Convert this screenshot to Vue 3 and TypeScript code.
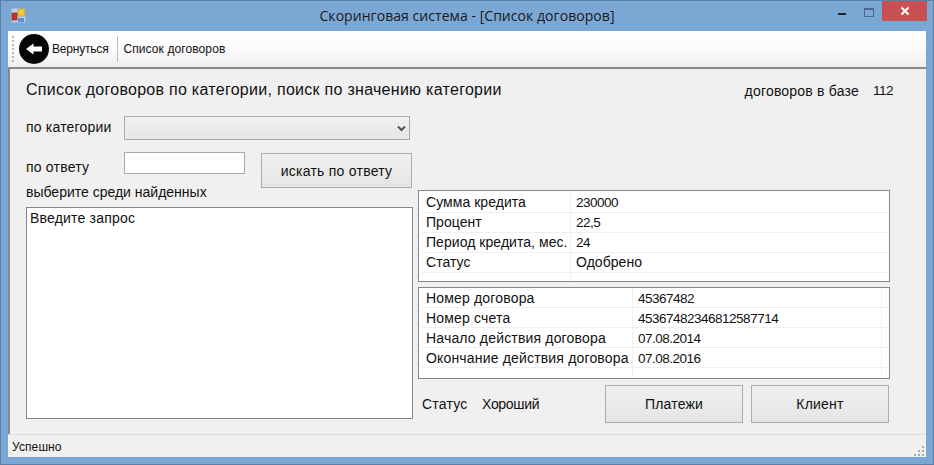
<script setup lang="ts">
interface Row {
  label: string
  value: string
}

const creditRows: Row[] = [
  { label: 'Сумма кредита', value: '230000' },
  { label: 'Процент', value: '22,5' },
  { label: 'Период кредита, мес.', value: '24' },
  { label: 'Статус', value: 'Одобрено' },
  { label: '', value: '' },
]

const contractRows: Row[] = [
  { label: 'Номер договора', value: '45367482' },
  { label: 'Номер счета', value: '45367482346812587714' },
  { label: 'Начало действия договора', value: '07.08.2014' },
  { label: 'Окончание действия договора', value: '07.08.2016' },
  { label: '', value: '' },
]

// digits in the original font are a bit narrower than the letters
const isNumeric = (value: string) => /^[\d.,]+$/.test(value)
</script>

<template>
  <div class="window">
    <header class="titlebar">
      <svg class="app-icon" width="15" height="15" viewBox="0 0 15 15">
        <rect x="0.5" y="0.5" width="14" height="14" fill="#c4ccd6" />
        <rect x="7" y="1" width="7" height="7" fill="#f3c93c" stroke="#a8893a" stroke-width="0.6" />
        <rect x="1" y="5" width="5" height="7" fill="#c9302c" stroke="#7c2420" stroke-width="0.6" />
        <rect x="7" y="10" width="6" height="4" fill="#5f8fd8" />
      </svg>
      <span class="title">Скоринговая система - [Список договоров]</span>
      <div class="controls">
        <span class="minimize"></span>
        <span class="maximize"></span>
        <span class="close">
          <svg width="10" height="10" viewBox="0 0 10 10">
            <path d="M1.5 1.5 L8.5 8.5 M8.5 1.5 L1.5 8.5" stroke="#fff" stroke-width="2" />
          </svg>
        </span>
      </div>
    </header>

    <div class="client">
      <nav class="toolbar">
        <span class="gripper"></span>
        <button class="tool back">
          <svg width="30" height="30" viewBox="0 0 30 30">
            <circle cx="15" cy="15" r="15" fill="#050505" />
            <path d="M7 15 L14.5 9.5 V12.5 H23 V17.5 H14.5 V20.5 Z" fill="#fff" />
          </svg>
          Вернуться
        </button>
        <span class="tool-sep"></span>
        <button class="tool list">Список договоров</button>
      </nav>

      <main class="main">
        <div class="head">
          <h1>Список договоров по категории, поиск по значению категории</h1>
          <div class="count"><span>договоров в базе</span><span class="num">112</span></div>
        </div>

        <div class="columns">
          <section class="left">
            <div class="field category">
              <label>по категории</label>
              <div class="select">
                <svg width="9" height="7" viewBox="0 0 9 7">
                  <path d="M1 1.5 L4.5 5 L8 1.5" fill="none" stroke="#555" stroke-width="2" />
                </svg>
              </div>
            </div>
            <div class="field answer">
              <label>по ответу</label>
              <input type="text" class="answer-input" />
              <button class="btn search">искать по ответу</button>
            </div>
            <label class="found-label">выберите среди найденных</label>
            <div class="listbox">Введите запрос</div>
          </section>

          <section class="right">
            <div class="grid credit">
              <div v-for="(row, i) in creditRows" :key="i" class="grid-row">
                <span class="cell">{{ row.label }}</span>
                <span class="cell" :class="{ num: isNumeric(row.value) }">{{ row.value }}</span>
              </div>
            </div>
            <div class="grid contract">
              <div v-for="(row, i) in contractRows" :key="i" class="grid-row">
                <span class="cell">{{ row.label }}</span>
                <span class="cell" :class="{ num: isNumeric(row.value) }">{{ row.value }}</span>
                <span class="cell"></span>
              </div>
            </div>
            <div class="actions">
              <span class="status-label">Статус</span>
              <span class="status-value">Хороший</span>
              <button class="btn action payments">Платежи</button>
              <button class="btn action">Клиент</button>
            </div>
          </section>
        </div>
      </main>

      <footer class="statusbar">
        <span>Успешно</span>
        <svg class="resize" width="12" height="12" viewBox="0 0 12 12" fill="#a9a9a9">
          <rect x="9" y="1" width="2" height="2" />
          <rect x="5" y="5" width="2" height="2" />
          <rect x="9" y="5" width="2" height="2" />
          <rect x="1" y="9" width="2" height="2" />
          <rect x="5" y="9" width="2" height="2" />
          <rect x="9" y="9" width="2" height="2" />
        </svg>
      </footer>
    </div>
  </div>
</template>

<style scoped>
.window {
  width: 934px;
  height: 465px;
  box-sizing: border-box;
  display: flex;
  flex-direction: column;
  background: #7ba7d4;
  border: 1px solid #5f7fa6;
  font-family: "Liberation Sans", Arial, sans-serif;
  font-size: 14px;
  letter-spacing: 0.2px;
  color: #111;
}

.titlebar {
  height: 30px;
  flex: none;
  display: flex;
  align-items: center;
  position: relative;
  padding-left: 10px;
}

.app-icon {
  margin-top: -2px;
}

.title {
  position: absolute;
  left: 0;
  right: 0;
  top: 5px;
  text-align: center;
  font-family: "Open Sans", sans-serif;
  font-size: 14px;
  letter-spacing: 0.05px;
  color: #1a1a1a;
}

.controls {
  position: absolute;
  top: 0;
  right: 6px;
  display: flex;
  align-items: flex-start;
}

.minimize {
  width: 8px;
  height: 2px;
  background: #222;
  margin-top: 12px;
  margin-right: 18px;
}

.maximize {
  width: 8px;
  height: 6px;
  border: 1px solid #4d6a8c;
  border-top-width: 2px;
  margin-top: 7px;
  margin-right: 8px;
}

.close {
  width: 45px;
  height: 20px;
  background: #c75050;
  display: flex;
  align-items: center;
  justify-content: center;
}

.client {
  flex: 1;
  min-height: 0;
  margin: 0 7px 7px;
  display: flex;
  flex-direction: column;
  background: #f0f0f0;
}

.toolbar {
  height: 38px;
  flex: none;
  box-sizing: border-box;
  display: flex;
  align-items: center;
  padding-left: 4px;
  background: linear-gradient(#ffffff, #fbfbfb 50%, #eeeeee);
  border-bottom: 2px solid #8a8a8a;
  border-radius: 2px 2px 0 0;
  font-size: 12px;
  letter-spacing: 0;
}

.gripper {
  width: 2px;
  height: 26px;
  background: repeating-linear-gradient(#b8b8b8 0 2px, transparent 2px 4px);
  margin-right: 5px;
}

.tool {
  border: 0;
  padding: 0;
  background: none;
  font: inherit;
  color: #111;
  display: flex;
  align-items: center;
  gap: 3px;
}

.back {
  letter-spacing: -0.2px;
}

.list {
  letter-spacing: 0.1px;
}

.tool-sep {
  width: 1px;
  height: 26px;
  background: #bdbdbd;
  margin: 0 5px 0 9px;
}

.main {
  flex: 1;
  min-height: 0;
  box-sizing: border-box;
  border-left: 2px solid #8a8a8a;
  padding: 0 0 0 16px;
}

.head {
  height: 47px;
  display: flex;
  justify-content: space-between;
  padding-right: 33px;
}

h1 {
  margin: 11px 0 0;
  height: 20px;
  font-size: 16px;
  font-weight: 400;
  letter-spacing: 0.28px;
  line-height: 20px;
}

.count {
  margin-top: 14px;
  display: flex;
  gap: 14px;
  line-height: 16px;
}

.columns {
  display: flex;
}

.left {
  width: 387px;
  flex: none;
}

.field {
  display: flex;
  align-items: flex-start;
}

.field label {
  width: 98px;
  flex: none;
}

.category {
  height: 36px;
}

.category label {
  line-height: 23px;
}

.select {
  width: 286px;
  height: 24px;
  box-sizing: border-box;
  border: 1px solid #acacac;
  background: linear-gradient(#f0f0f0, #e5e5e5);
  display: flex;
  align-items: center;
  justify-content: flex-end;
  padding-right: 3px;
}

.answer {
  height: 31px;
}

.answer label {
  line-height: 30px;
}

.answer-input {
  width: 121px;
  height: 22px;
  box-sizing: border-box;
  border: 1px solid #a9a9a9;
  background: #fff;
  padding: 0;
  outline: none;
}

.btn {
  box-sizing: border-box;
  border: 1px solid #acacac;
  background: linear-gradient(#f0f0f0, #e5e5e5);
  font-family: inherit;
  font-size: 14px;
  letter-spacing: 0.2px;
  color: #111;
  padding: 0;
}

.search {
  width: 151px;
  height: 35px;
  margin: 1px 0 0 16px;
  letter-spacing: 0.25px;
}

.found-label {
  display: block;
  height: 24px;
  line-height: 19px;
  letter-spacing: 0;
}

.listbox {
  width: 387px;
  height: 212px;
  box-sizing: border-box;
  border: 1px solid #82868e;
  background: #fff;
  padding: 2px 3px;
  line-height: 16px;
}

.right {
  margin-left: 5px;
  padding-top: 74px;
  width: 472px;
  flex: none;
}

.grid {
  box-sizing: border-box;
  border: 1px solid #82868e;
  background: #fff;
  height: 92px;
  overflow: hidden;
}

.credit {
  padding: 2px 0 0 2px;
  letter-spacing: 0.05px;
}

.contract {
  margin-top: 5px;
  padding: 0 0 0 2px;
  letter-spacing: 0.17px;
}

.grid-row {
  display: grid;
  height: 20px;
  box-sizing: border-box;
  border-bottom: 1px solid #f0f0f0;
}

.credit .grid-row {
  grid-template-columns: 150px 1fr;
}

.contract .grid-row {
  grid-template-columns: 212px 249px 1fr;
}

.cell {
  padding-left: 5px;
  border-right: 1px solid #f0f0f0;
  white-space: nowrap;
}

.credit .cell {
  line-height: 19px;
}

.contract .cell {
  line-height: 21px;
}

.cell:last-child {
  border-right: 0;
}

.num {
  font-size: 13.5px;
  letter-spacing: -0.5px;
}

.actions {
  margin-top: 6px;
  display: flex;
  align-items: center;
  height: 38px;
  padding-left: 4px;
}

.status-label {
  width: 60px;
  flex: none;
}

.status-value {
  width: 123px;
  flex: none;
  letter-spacing: -0.3px;
}

.action {
  width: 138px;
  height: 38px;
  flex: none;
}

.payments {
  margin-right: 8px;
}

.statusbar {
  height: 23px;
  flex: none;
  box-sizing: border-box;
  border-top: 1px solid #dcdcdc;
  display: flex;
  align-items: center;
  justify-content: space-between;
  padding: 2px 0 0 4px;
  font-size: 12px;
  letter-spacing: 0.1px;
}

.resize {
  align-self: flex-end;
  margin-right: 1px;
}
</style>
